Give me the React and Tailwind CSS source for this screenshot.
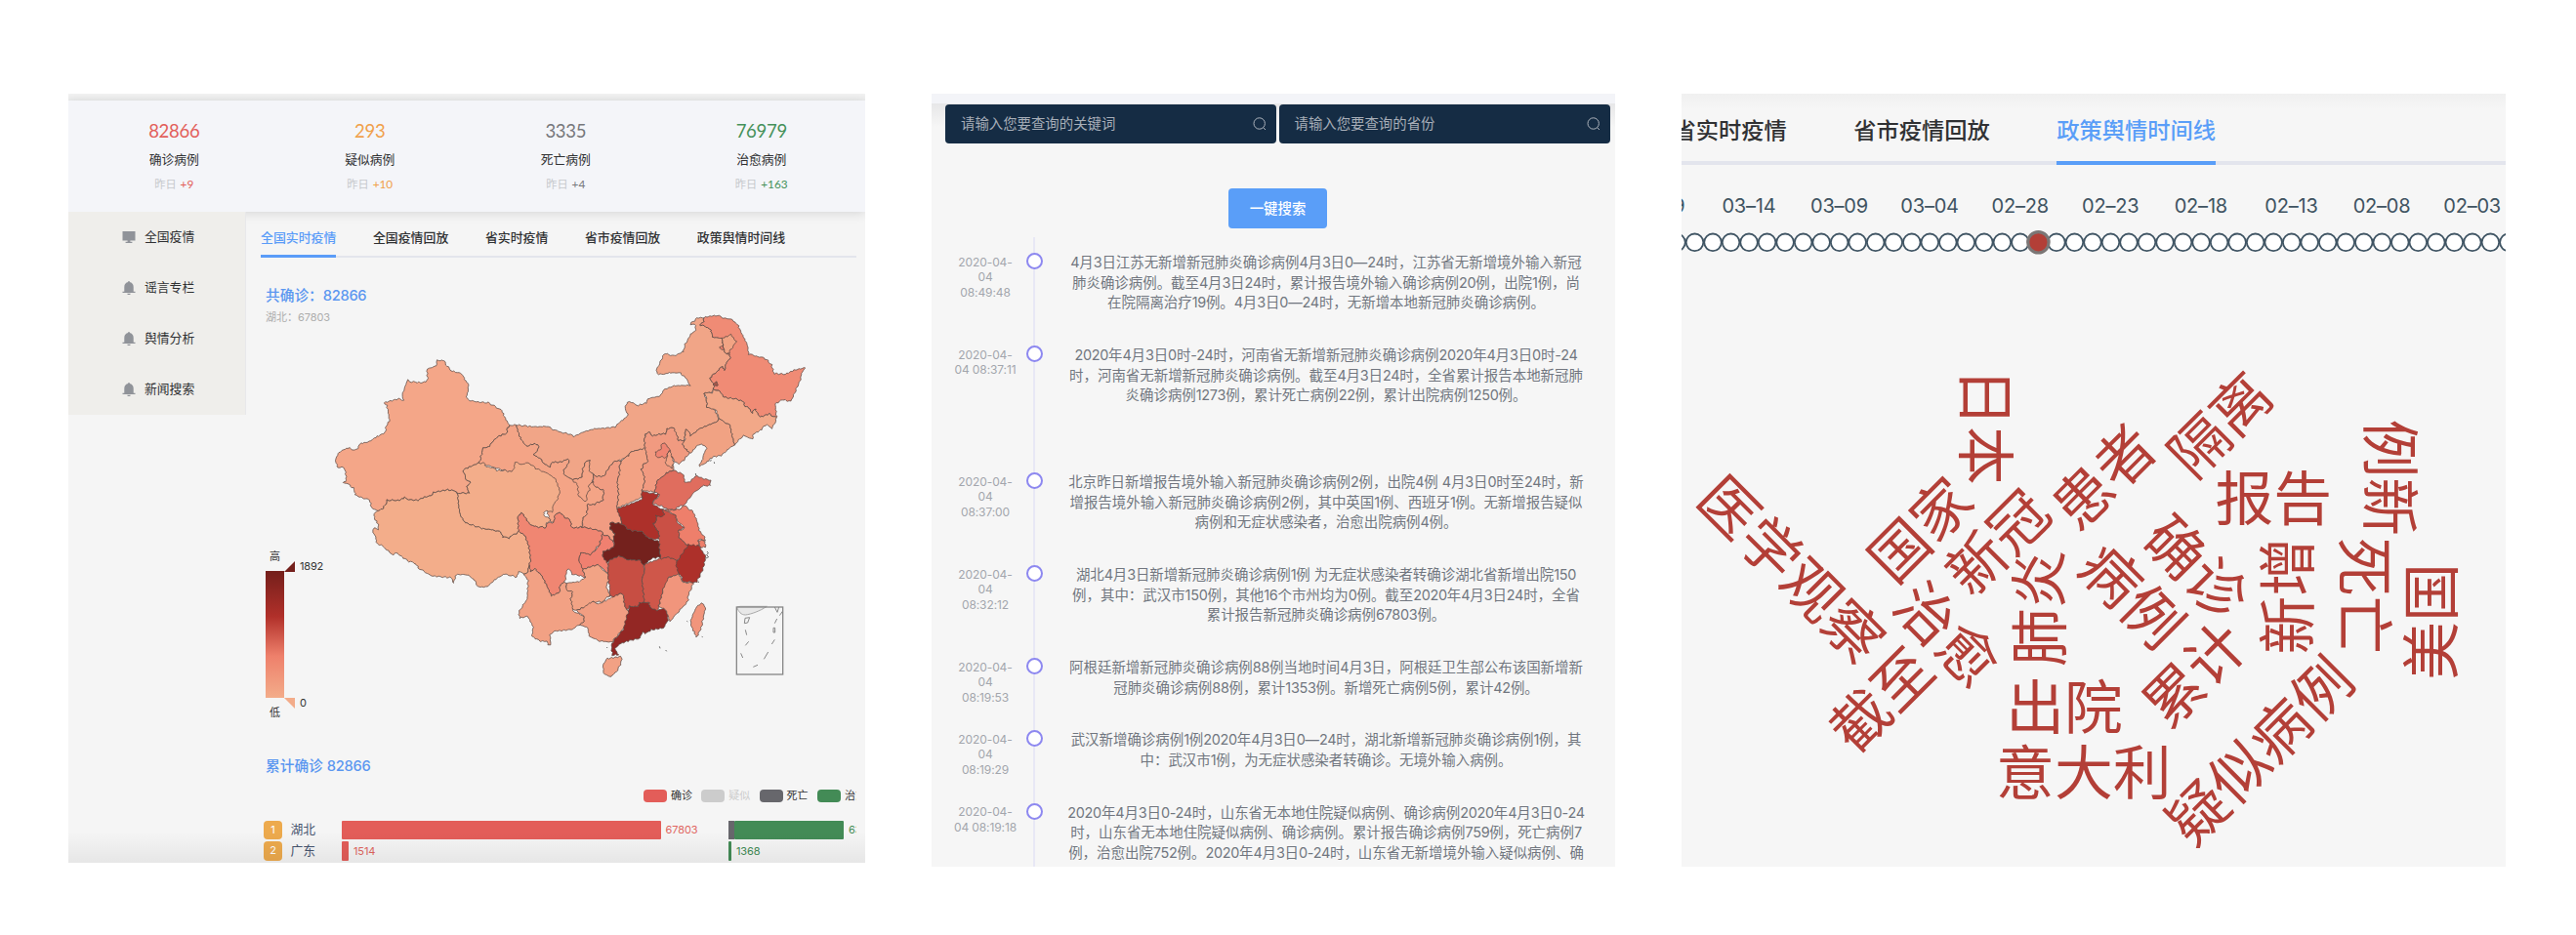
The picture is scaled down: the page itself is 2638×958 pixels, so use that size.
import React from "react";

const STATS = [
  { value: "82866", label: "确诊病例", delta: "+9", color: "text-[#e2605b]" },
  { value: "293", label: "疑似病例", delta: "+10", color: "text-[#f0a04b]" },
  { value: "3335", label: "死亡病例", delta: "+4", color: "text-[#77787c]" },
  { value: "76979", label: "治愈病例", delta: "+163", color: "text-[#45915a]" },
];

const TABS = ["全国实时疫情", "全国疫情回放", "省实时疫情", "省市疫情回放", "政策舆情时间线"];

// Province outlines: [fill, vertical offset, horizontal offset, points]
const PROVINCES = [
  ["#f4a688", 0, 0, "352,178 376,178 380,192 398,210 420,216 432,222 440,240 449,252 448,272 442,288 448,300 480,306 510,308 535,322 552,332 560,350 575,378 568,386 569,402 545,410 525,424 514,442 493,448 488,475 482,493 460,502 432,514 440,532 440,542 456,554 444,566 452,586 415,586 410,580 385,575 340,584 333,594 310,600 295,608 265,606 252,598 240,608 200,608 188,632 170,640 152,632 146,606 128,602 102,592 96,570 76,556 62,554 74,546 70,512 60,506 48,508 40,486 48,464 70,450 86,446 90,454 108,450 118,432 140,430 160,416 194,400 196,378 207,364 203,340 199,318 190,308 235,296 249,300 246,284 262,238 275,244 310,246 324,240 322,204 345,196 352,190"],
  ["#f3ad8a", 570, 0, "170,70 160,78 160,92 172,110 172,128 160,122 154,134 164,150 168,172 186,178 200,192 218,206 226,198 262,224 285,232 296,246 335,270 398,276 403,292 412,266 440,266 456,272 470,286 476,304 508,304 525,286 560,264 598,274 604,256 620,264 630,262 636,240 640,218 635,180 622,146 604,130 598,140 585,144 572,154 556,150 548,134 520,128 490,124 440,106 424,84 420,60 416,20 410,10 385,5 340,14 333,24 310,30 295,38 265,36 252,28 240,38 200,38 188,62"],
  ["#f4a486", 0, 0, "575,378 596,376 604,400 606,410 626,442 650,434 664,436 664,450 650,468 670,480 685,498 700,504 706,490 735,490 756,480 758,492 742,515 742,528 768,544 790,540 834,550 840,566 865,578 862,610 842,616 838,622 816,620 812,655 802,660 798,688 785,692 766,692 762,670 745,660 728,644 714,654 712,676 700,672 690,640 700,600 640,540 482,493 488,475 493,448 514,442 525,424 545,410 569,402 568,386"],
  ["#f3ad8a", 0, 0, "482,493 500,494 502,504 525,508 535,516 560,516 572,520 588,516 592,490 612,498 632,492 660,512 690,524 715,540 730,580 722,606 708,624 708,644 690,640 680,644 684,656 702,666 700,672 688,678 688,694 676,690 660,690 640,684 626,664 612,646 602,656 602,690 604,700 598,710 585,714 572,724 556,720 548,704 520,698 490,694 440,676 424,654 420,630 416,590 415,586 452,586 444,566 456,554 440,542 440,532 432,514 460,502"],
  ["#f1a587", 0, 810, "-214,376 -180,380 -150,382 -120,380 -100,390 -80,398 -50,404 -38,412 -10,398 25,388 60,386 90,382 108,364 130,348 120,326 128,306 145,308 160,316 185,308 195,294 228,288 240,268 270,256 320,254 310,236 290,216 262,216 250,216 242,220 222,220 216,208 242,156 270,164 300,150 304,130 322,98 338,86 336,70 322,66 340,48 362,46 362,58 350,68 372,76 384,84 390,106 418,110 424,144 430,158 442,158 444,172 432,184 426,208 420,196 400,214 380,234 394,252 392,270 384,276 362,280 370,300 372,322 392,326 408,356 404,366 375,378 345,390 322,410 316,394 306,390 302,424 284,424 280,408 272,404 270,384 250,388 246,404 230,404 204,410 196,398 182,404 180,420 182,448 164,452 140,458 132,470 120,476 106,484 88,488 70,508 56,534 32,534 24,528 6,518 12,486 2,486 -8,505 -12,536 -20,540 -42,544 -68,528 -68,515 -52,492 -54,480 -75,490 -104,490 -110,504 -125,498 -140,480 -160,468 -146,450 -146,436 -160,434 -184,442 -204,410"],
  ["#f4a486", 0, 0, "768,544 790,540 798,536 802,505 812,486 822,486 820,516 834,530 830,552 818,560 822,576 812,590 812,612 800,606 788,594 784,560"],
  ["#f08b75", 0, 810, "362,46 380,42 405,40 425,48 450,52 468,72 484,104 496,130 500,158 520,164 548,170 570,190 578,218 612,220 640,208 674,200 662,218 660,236 650,256 630,304 602,298 582,312 586,354 562,342 552,346 534,352 520,326 512,340 498,322 488,318 486,306 460,296 425,292 412,272 392,266 394,252 380,234 400,214 420,196 426,208 432,184 444,172 442,158 430,158 424,144 418,110 390,106 384,84 372,76 350,68 362,58"],
  ["#f2a484", 0, 810, "418,110 436,104 446,98 462,120 450,138 440,154 430,158 424,146"],
  ["#ec806c", 0, 810, "410,138 420,131 424,144 416,144"],
  ["#a8574b", 0, 810, "391,250 400,244 407,250 402,258 396,254"],
  ["#f2a888", 0, 810, "392,268 412,272 425,292 460,296 486,306 488,318 498,322 512,340 520,326 534,352 552,346 562,342 586,354 582,370 570,386 554,374 540,390 514,404 512,420 484,408 456,438 448,406 442,376 428,370 410,356 400,330 372,322 370,290 362,280 372,276 388,278"],
  ["#f1a283", 0, 810, "410,356 428,370 442,376 448,406 456,438 430,456 418,470 392,474 360,498 350,502 346,498 356,490 362,464 372,450 364,438 345,436 330,454 318,464 312,456 296,436 304,422 306,390 316,394 322,410 345,390 375,378 404,366"],
  ["#f19a80", 0, 810, "318,464 300,484 288,496 274,490 265,472 270,515 248,524 218,550 212,582 172,578 180,550 178,530 170,514 178,496 190,490 182,450 180,420 184,404 196,398 204,410 230,404 246,404 250,388 270,384 280,408 284,424 302,424 296,436 312,456"],
  ["#f3a284", 0, 810, "250,464 260,456 262,470 270,490 264,508 248,500 244,486 250,478"],
  ["#f08472", 0, 810, "232,438 242,430 250,444 260,454 250,464 246,478 232,474 216,476 214,460 230,452"],
  ["#f3a284", 0, 810, "182,448 164,452 140,458 132,470 120,476 110,486 104,500 102,530 96,546 100,590 95,632 135,616 172,598 172,578 180,550 178,530 170,514 178,496 190,490"],
  ["#f19c82", 0, 0, "920,486 898,488 880,508 866,534 842,534 834,530 832,556 840,566 865,578 862,610 842,616 838,622 816,620 812,655 802,660 798,690 830,696 858,704 862,712 880,720 895,736 895,720 900,710 885,698 885,676 920,680 918,666 905,632 910,590 906,546 912,530 914,500"],
  ["#f08672", 570, 0, "602,130 602,86 612,76 626,94 640,114 660,120 676,120 688,124 690,108 712,106 714,84 728,74 745,90 762,100 766,122 785,122 798,120 830,126 858,134 862,142 850,175 825,205 795,198 788,222 800,238 800,250 808,274 785,268 768,266 762,252 752,250 745,290 732,296 728,322 705,332 690,300 670,264 652,248 640,258 636,240 640,218 635,180 622,146"],
  ["#f08070", 570, 0, "862,142 880,150 895,166 897,180 885,188 862,196 862,212 878,230 878,262 864,250 850,236 830,240 800,250 795,236 788,222 795,198 825,205 850,180"],
  ["#f2a184", 570, 0, "636,240 640,258 652,248 670,264 690,300 705,332 728,322 732,296 745,290 750,292 750,310 770,320 764,340 772,366 768,378 804,394 804,410 790,420 770,434 740,438 712,440 700,452 702,482 695,484 690,472 668,470 644,456 648,428 632,394 606,400 604,380 630,340 632,284 620,264 630,262"],
  ["#f2a385", 570, 0, "750,292 790,288 808,274 800,250 830,240 850,236 866,258 878,262 880,288 872,300 884,330 860,350 830,350 820,364 800,368 780,376 770,372 764,340 770,320 750,312"],
  ["#f29e82", 570, 0, "780,376 800,368 830,350 850,356 870,346 890,336 918,324 926,330 928,356 934,374 942,376 940,402 926,430 890,474 850,470 820,455 815,430 790,420 804,410 804,394"],
  ["#932724", 570, 0, "942,376 944,364 970,364 975,352 1005,352 1006,366 1030,376 1050,370 1060,384 1062,408 1048,430 1010,436 992,448 985,442 975,462 940,470 912,480 900,494 910,512 892,514 888,490 895,470 926,434 932,405"],
  ["#c74e43", 570, 0, "880,222 915,208 935,220 975,222 988,234 990,258 982,280 990,352 975,352 970,364 944,364 934,374 928,356 926,330 918,324 895,334 882,332 884,310 880,288 878,262"],
  ["#cf574a", 570, 0, "990,234 1040,216 1062,212 1090,222 1092,240 1096,266 1066,274 1060,296 1048,308 1034,364 1030,378 1006,366 1005,352 990,352 982,280 990,258"],
  ["#f1957c", 570, 0, "1096,264 1108,290 1140,292 1124,330 1124,348 1100,374 1068,410 1060,384 1050,370 1034,366 1048,308 1064,276"],
  ["#ca5045", 570, 0, "1045,66 1060,72 1088,86 1088,102 1110,122 1096,130 1096,152 1125,178 1118,186 1110,205 1090,222 1060,212 1040,218 1036,195 1034,165 1034,136 1016,110 1028,98 1025,84 1050,82"],
  ["#ee7f6b", 570, 0, "1052,66 1076,68 1100,64 1112,54 1138,72 1152,102 1158,130 1176,152 1176,160 1155,158 1158,178 1125,178 1096,152 1096,130 1110,128 1110,118 1090,100 1086,84"],
  ["#ee7f6b", 570, 0, "1155,160 1176,164 1178,182 1162,182"],
  ["#74211d", 570, 0, "885,106 920,110 945,130 985,134 995,150 1035,165 1036,195 1040,212 1015,216 988,236 975,222 935,220 915,208 880,222 874,230 862,212 862,196 885,188 897,180 895,150 900,140 885,128"],
  ["#ad302a", 570, 0, "905,64 945,50 982,36 982,10 1022,18 1035,20 1012,48 1045,66 1050,82 1040,90 1025,84 1028,98 1016,110 1034,136 1034,156 1020,158 995,150 985,134 945,130 920,110 918,96"],
  ["#e06d5e", 0, 810, "212,582 218,550 248,524 268,516 300,528 304,552 318,552 340,532 355,540 382,546 382,562 358,564 330,586 302,622 282,628 276,636 250,636 240,628 204,616 228,590"],
  ["#ad302a", 570, 0, "1125,174 1158,178 1178,210 1170,250 1150,290 1108,288 1104,270 1094,262 1086,234 1102,208 1110,196"],
  ["#f1957c", 570, 0, "1150,364 1166,354 1178,366 1164,430 1150,460 1132,418 1136,396"],
  ["#f2a184", 570, 0, "875,524 918,518 920,532 905,565 886,580 866,572 862,545"],
];

// Adds a small position-based ripple so that shared borders stay aligned.
function outline(points, dy, dx) {
  const pts = points.split(" ").map((p) => p.split(",").map(Number));
  const out = [];
  pts.forEach(([x1, y1], i) => {
    const [x2, y2] = pts[(i + 1) % pts.length];
    const n = Math.max(1, Math.round(Math.hypot(x2 - x1, y2 - y1) / 5));
    for (let k = 0; k < n; k++) {
      const x = x1 + ((x2 - x1) * k) / n + dx;
      const y = y1 + ((y2 - y1) * k) / n + dy;
      const rx = 1.5 * Math.sin(y * 0.42 + x * 0.13) + 0.9 * Math.sin(y * 0.9 - x * 0.3);
      const ry = 1.5 * Math.sin(x * 0.42 - y * 0.13) + 0.9 * Math.sin(x * 0.9 + y * 0.3);
      out.push(`${(x + rx).toFixed(1)},${(y + ry).toFixed(1)}`);
    }
  });
  return out.join(" ");
}

function ChinaMap() {
  return (
    <svg className="absolute left-[78px] top-[46px] h-[390px] w-[500px]" viewBox="0 0 1500 1170">
      <g stroke="#5b4a44" strokeOpacity="0.75" strokeWidth="3" strokeLinejoin="round">
        {PROVINCES.map(([fill, dy, dx, pts], i) => (
          <polygon key={i} fill={fill} points={outline(pts, dy, dx)} />
        ))}
      </g>
      <g fill="none" stroke="#6b6b6b" strokeWidth="3">
        <path d="M1182 765l4 5-5 6 6 6-8 4M1120 979l3 2M1155 858l3 2M1166 1027l3 1M1036 1057l2 6M1055 1068l3 4M874 1059l2 3M1147 525l1 6M1190 487l6 -2M1204 490l1 5" />
        <path d="M1274 936L1284 934H1366C1345 948 1318 958 1300 960C1286 960 1280 950 1274 938" fill="#e8e8e8" stroke="#aaa" />
        <rect x="1273" y="936" width="142" height="207" stroke="#888" strokeWidth="4" />
        <path stroke="#888" d="M1390 936l8 16 5-16M1415 948l-10 14M1299 970l14-2-6 16-10 2zM1397 972l-7 14M1300 1006l4 16M1386 1000h5v14h-5zM1310 1042l-10 12M1390 1036l-9 14M1286 1078l6 14M1370 1074l-13 22M1324 1120l14-6" />
      </g>
    </svg>
  );
}

function MonitorIcon() {
  return (
    <svg className="h-[14px] w-[14px]" viewBox="0 0 14 14" fill="#909399">
      <path d="M.5 1h13v9.600H.5zM5.600 10.600h2.800v1.200h2V13H3.600v-1.200h2z" />
    </svg>
  );
}

function BellIcon() {
  return (
    <svg className="h-[14px] w-[14px]" viewBox="0 0 14 14" fill="#909399">
      <path d="M6.300 0h1.400v1.100C10.200 1.500 11.700 3.400 11.700 6v4.700h1.800v1.200H.5v-1.200h1.800V6c0-2.600 1.500-4.500 4-4.900zM5.300 12.700h3.400a1.700 1.500 0 0 1-3.400 0z" />
    </svg>
  );
}

function DashboardPanel() {
  return (
    <section className="flex h-[788px] w-[816px] shrink-0 flex-col overflow-hidden bg-[#f5f5f5] font-['Lato','Noto_Sans_CJK_SC',sans-serif]">
      <div className="h-[7px] shrink-0 bg-gradient-to-b from-[#f2f2f2] to-[#ebecec]" />
      <div className="relative z-10 flex h-[114px] shrink-0 bg-[#f4f5f9] pl-2 pr-1.5 shadow-[0_2px_10px_rgba(0,0,0,0.12)]">
        {STATS.map((s) => (
          <div key={s.label} className="flex flex-1 flex-col items-center pt-[19px]">
            <div className={`${s.color} h-6 text-[18.500px] leading-6 tracking-[-0.3px]`}>{s.value}</div>
            <div className="mt-[7px] h-5 text-[12.800px] leading-5 text-[#303133]">{s.label}</div>
            <div className="mt-[6px] flex h-5 items-center gap-1 text-[11.200px] leading-5 text-[#c6c8cc]">
              <span>昨日</span>
              <span className={`${s.color} text-[11.800px]`}>{s.delta}</span>
            </div>
          </div>
        ))}
      </div>
      <div className="flex min-h-0 flex-1">
        <div className="w-[182px] shrink-0">
          <nav className="relative z-20 h-[208px] border-r border-[#e8e8ea] bg-[#efeeeb]">
            {["全国疫情", "谣言专栏", "舆情分析", "新闻搜索"].map((t, i) => (
              <div key={t} className="flex h-[52px] items-center gap-[9px] pl-[55px] text-[12.800px] text-[#303133]">
                {i === 0 ? <MonitorIcon /> : <BellIcon />}
                <span className="pb-[2px] leading-5">{t}</span>
              </div>
            ))}
          </nav>
        </div>
        <div className="flex flex-1 flex-col pl-[15px] pr-[9px]">
          <div className="flex h-[47px] shrink-0 gap-[37.600px] border-b-2 border-[#e3e5ec] pt-[16px] text-[12.900px] font-medium leading-5 text-[#303133]">
            {TABS.map((t, i) => (
              <div
                key={t}
                className={
                  i === 0
                    ? "h-[31px] whitespace-nowrap border-b-[3px] border-[#5a9cf8] text-[#5a9cf8]"
                    : "whitespace-nowrap"
                }
              >
                {t}
              </div>
            ))}
          </div>
          <div className="relative -mx-[15px] h-[509px] shrink-0 pl-[20px] font-['Liberation_Sans','Noto_Sans_CJK_SC',sans-serif]">
            <div className="pt-[28px] text-[14.700px] font-medium leading-[22px] text-[#5b97f0]">共确诊：<span className="font-['Inter'] tracking-[-0.3px]">82866</span></div>
            <div className="mt-[2px] text-[11px] leading-[18px] text-[#adadad]">湖北：<span className="font-['Inter'] tracking-[-0.1px]">67803</span></div>
            <ChinaMap />
            <div className="mt-[228px] flex items-start text-[11px] text-[#333]">
              <div className="flex w-[19px] flex-col items-center leading-4">
                <span>高</span>
                <div className="my-[7px] h-[130px] w-[19px] bg-[linear-gradient(to_bottom,#741f1b,#b1302a_36%,#ee806b_67%,#f3ac8a)]" />
                <span>低</span>
              </div>
              <div className="flex h-[152px] flex-col justify-between pt-[12px] font-['Inter'] tracking-[-0.2px]">
                <div className="flex h-3 items-center gap-[5px]">
                  <svg className="h-[11px] w-[11px]" viewBox="0 0 11 11"><path d="M0 11H11V0z" fill="#74201c" /></svg>
                  <span className="leading-3">1892</span>
                </div>
                <div className="-mb-3 flex h-3 items-center gap-[5px]">
                  <svg className="h-[11px] w-[11px]" viewBox="0 0 11 11"><path d="M0 0H11V11z" fill="#f3ac8a" /></svg>
                  <span className="leading-3">0</span>
                </div>
              </div>
            </div>
            <div className="mt-[36px] text-[14.700px] font-medium leading-[22px] text-[#5b97f0]">累计确诊 <span className="font-['Inter'] tracking-[-0.3px]">82866</span></div>
          </div>
          <div className="relative -ml-[15px] -mr-[9px] flex-1 font-['Inter','Noto_Sans_CJK_SC',sans-serif] text-[11px]">
            <div className="flex w-[625px] overflow-hidden whitespace-nowrap pl-[407px] pt-[36px] leading-[13px]">
              <div className="flex w-[59.300px] shrink-0 gap-1 text-[#333]"><i className="h-[13px] w-6 rounded bg-[#e35d59]" />确诊</div>
              <div className="flex w-[59.300px] shrink-0 gap-1 text-[#ccc]"><i className="h-[13px] w-6 rounded bg-[#ccc]" />疑似</div>
              <div className="flex w-[59.300px] shrink-0 gap-1 text-[#333]"><i className="h-[13px] w-6 rounded bg-[#67676c]" />死亡</div>
              <div className="flex w-[59.300px] shrink-0 gap-1 text-[#333]"><i className="h-[13px] w-6 rounded bg-[#438b56]" />治愈</div>
            </div>
            <div className="mt-[18.500px] flex w-[625px] flex-col gap-[2px] overflow-hidden pl-[18px]">
              <div className="flex h-[19.500px] shrink-0 items-center">
                <b className="h-full w-[19px] shrink-0 rounded-sm bg-[#edaa4d] text-center font-normal leading-[19px] text-white">1</b>
                <span className="w-[61px] shrink-0 pl-[8.500px] text-[12.800px] leading-5 text-[#46546e]">湖北</span>
                <i className="h-full w-[327px] shrink-0 rounded-[1px] bg-[#e35d59]" />
                <span className="w-[69px] shrink-0 pl-[4.500px] tracking-[-0.1px] text-[#e06560]">67803</span>
                <i className="h-full w-[6px] shrink-0 bg-[#67676c]" />
                <i className="h-full w-[112px] shrink-0 rounded-[1px] bg-[#438b56]" />
                <span className="shrink-0 pl-[5px] tracking-[-0.1px] text-[#438b56]">63762</span>
              </div>
              <div className="flex h-[19.500px] shrink-0 items-center">
                <b className="h-full w-[19px] shrink-0 rounded-sm bg-[#edaa4d] text-center font-normal leading-[19px] text-white">2</b>
                <span className="w-[61px] shrink-0 pl-[8.500px] text-[12.800px] leading-5 text-[#46546e]">广东</span>
                <i className="h-full w-[7px] shrink-0 rounded-[1px] bg-[#e35d59]" />
                <span className="w-[389px] shrink-0 pl-[5px] tracking-[-0.1px] text-[#e06560]">1514</span>
                <i className="h-full w-[3px] shrink-0 rounded-[1px] bg-[#438b56]" />
                <span className="shrink-0 pl-[5px] tracking-[-0.1px] text-[#438b56]">1368</span>
              </div>
            </div>
          </div>
        </div>
      </div>
      <div className="relative z-20 -mt-[32px] h-[32px] shrink-0 bg-gradient-to-b from-transparent to-black/6" />
    </section>
  );
}

const NEWS = [
  {
    time: ["2020-04-", "04", "08:49:48"],
    height: "h-[95px]",
    lines: [
      "4月3日江苏无新增新冠肺炎确诊病例4月3日0—24时，江苏省无新增境外输入新冠",
      "肺炎确诊病例。截至4月3日24时，累计报告境外输入确诊病例20例，出院1例，尚",
      "在院隔离治疗19例。4月3日0—24时，无新增本地新冠肺炎确诊病例。",
    ],
  },
  {
    time: ["2020-04-", "04 08:37:11"],
    height: "h-[130px]",
    lines: [
      "2020年4月3日0时-24时，河南省无新增新冠肺炎确诊病例2020年4月3日0时-24",
      "时，河南省无新增新冠肺炎确诊病例。截至4月3日24时，全省累计报告本地新冠肺",
      "炎确诊病例1273例，累计死亡病例22例，累计出院病例1250例。",
    ],
  },
  {
    time: ["2020-04-", "04", "08:37:00"],
    height: "h-[95px]",
    lines: [
      "北京昨日新增报告境外输入新冠肺炎确诊病例2例，出院4例 4月3日0时至24时，新",
      "增报告境外输入新冠肺炎确诊病例2例，其中英国1例、西班牙1例。无新增报告疑似",
      "病例和无症状感染者，治愈出院病例4例。",
    ],
  },
  {
    time: ["2020-04-", "04", "08:32:12"],
    height: "h-[95px]",
    lines: [
      "湖北4月3日新增新冠肺炎确诊病例1例 为无症状感染者转确诊湖北省新增出院150",
      "例，其中：武汉市150例，其他16个市州均为0例。截至2020年4月3日24时，全省",
      "累计报告新冠肺炎确诊病例67803例。",
    ],
  },
  {
    time: ["2020-04-", "04", "08:19:53"],
    height: "h-[74.300px]",
    lines: [
      "阿根廷新增新冠肺炎确诊病例88例当地时间4月3日，阿根廷卫生部公布该国新增新",
      "冠肺炎确诊病例88例，累计1353例。新增死亡病例5例，累计42例。",
    ],
  },
  {
    time: ["2020-04-", "04", "08:19:29"],
    height: "h-[74.300px]",
    lines: [
      "武汉新增确诊病例1例2020年4月3日0—24时，湖北新增新冠肺炎确诊病例1例，其",
      "中：武汉市1例，为无症状感染者转确诊。无境外输入病例。",
    ],
  },
  {
    time: ["2020-04-", "04 08:19:18"],
    height: "h-[95px]",
    lines: [
      "2020年4月3日0-24时，山东省无本地住院疑似病例、确诊病例2020年4月3日0-24",
      "时，山东省无本地住院疑似病例、确诊病例。累计报告确诊病例759例，死亡病例7",
      "例，治愈出院752例。2020年4月3日0-24时，山东省无新增境外输入疑似病例、确",
    ],
  },
];

// Sets runs of digits a little tighter than the Chinese text around them.
function NewsLine({ text }) {
  return (
    <div className="whitespace-nowrap">
      {text.split(/([\d-]+)/).map((part, i) =>
        i % 2 ? <span key={i} className="tracking-[-0.3px]">{part}</span> : part
      )}
    </div>
  );
}

function SearchField({ text }) {
  return (
    <div className="flex h-10 w-[339px] items-center justify-between rounded bg-[#152c44] pl-4 pr-[10px] text-[14.400px] text-[#a7aeb8]">
      <span>{text}</span>
      <svg className="h-[14px] w-[14px]" viewBox="0 0 14 14" fill="none" stroke="#aeb4bd" strokeWidth="1">
        <circle cx="6.700" cy="6.500" r="5.700" />
        <path d="M10.600 10.600l2.400 2.400" />
      </svg>
    </div>
  );
}

function NewsPanel() {
  return (
    <section className="ml-[68px] flex h-[792px] w-[700px] shrink-0 flex-col overflow-hidden bg-[#f6f6f6] font-['Inter','Noto_Sans_CJK_SC',sans-serif]">
      <div className="h-[10px] shrink-0 bg-[#f3f4f8]" />
      <div className="flex h-[24px] shrink-0 gap-[2.500px] bg-gradient-to-b from-[#e7e7e8] to-[#f6f6f6] pl-[14px] pt-px">
        <SearchField text="请输入您要查询的关键词" />
        <SearchField text="请输入您要查询的省份" />
      </div>
      <button className="ml-[304px] mt-[63px] h-[41px] w-[101px] shrink-0 rounded bg-[#5a9ef8] text-[14.400px] font-medium text-white">
        一键搜索
      </button>
      <div className="relative mt-[9px] flex-1 pt-[15px]">
        <div className="absolute bottom-0 left-[104px] top-0 w-[2px] bg-[#e8e8f5]" />
        {NEWS.map((n) => (
          <div key={n.time.join()} className={`${n.height} relative flex`}>
            <div className="ml-[20px] flex w-[70px] flex-col items-center pt-[2.500px] text-[12px] leading-[15.500px] tracking-[-0.1px] text-[#a3a6ad]">
              {n.time.map((t) => (
                <div key={t} className="whitespace-nowrap">{t}</div>
              ))}
            </div>
            <div className="ml-[7px] mt-[1px] h-[17px] w-[17px] shrink-0 rounded-full border-2 border-[#8d88f0] bg-white" />
            <div className="ml-[25px] flex w-[530px] shrink-0 flex-col items-center pt-px text-[14.450px] leading-[20.700px] text-[#71767f]">
              {n.lines.map((l) => (
                <NewsLine key={l} text={l} />
              ))}
            </div>
          </div>
        ))}
      </div>
    </section>
  );
}

const DATES = ["03–19", "03–14", "03–09", "03–04", "02–28", "02–23", "02–18", "02–13", "02–08", "02–03"];

// [word, centre x, centre y, rotation]
const WORDS = [
  ["日本", 2034.3, 436.9, 90],
  ["医学观察", 1835.3, 582.2, 45],
  ["国家", 1965.7, 541.8, -45],
  ["新冠", 2045, 555, -45],
  ["治愈", 1994.5, 649, 45],
  ["截至", 1926, 716, -45],
  ["患者", 2153.7, 487.7, -45],
  ["肺炎", 2087.3, 623.3, -90],
  ["出院", 2114, 723.3, 0],
  ["意大利", 2133.8, 790.3, 0],
  ["隔离", 2272.7, 434.3, -45],
  ["报告", 2328.2, 509.3, 0],
  ["例新", 2448, 489.3, 90],
  ["确诊", 2250, 581, 45],
  ["病例", 2184, 610, 45],
  ["新增", 2341.3, 610.8, -90],
  ["累计", 2246.7, 690, -45],
  ["死亡", 2422, 610.5, 90],
  ["美国", 2489, 637, -90],
  ["疑似病例", 2313.7, 768.5, -45],
];

function TimelinePanel() {
  const circles = Array.from({ length: 47 }, (_, i) => i - 20);
  return (
    <section className="ml-[68px] flex h-[792px] w-[844px] shrink-0 flex-col overflow-hidden bg-[#f6f6f6] font-['Inter','Noto_Sans_CJK_SC',sans-serif]">
      <div className="flex h-[73px] shrink-0 border-b-4 border-[#e3e5ed] bg-[linear-gradient(to_bottom,#f0f0f0,#f6f6f6_16px)]">
        <div className="-ml-[8.500px] flex shrink-0 gap-[68.500px] whitespace-nowrap pt-[22px] text-[23.250px] font-medium leading-8 text-[#303133]">
          <span>省实时疫情</span>
          <span>省市疫情回放</span>
          <span className="h-[51px] border-b-4 border-[#5a9ef8] text-[#5a9ef8]">政策舆情时间线</span>
        </div>
      </div>
      <div className="-ml-[70px] mt-[30px] flex shrink-0 text-[20px] leading-6 tracking-[-0.2px] text-[#3f5361]">
        {DATES.map((d) => (
          <span key={d} className="w-[92.600px] shrink-0 text-center">{d}</span>
        ))}
      </div>
      <svg className="mt-[11px] h-[28px] w-[844px] shrink-0" viewBox="1722 234 844 28">
        <path d="M1722 248.300H2566" stroke="#304654" strokeWidth="2" />
        <g fill="#fff" stroke="#405564" strokeWidth="1.800">
          {circles.map((k) => (
            <circle key={k} cx={2087.4 + k * 18.52} cy="248.300" r="8.800" />
          ))}
        </g>
        <circle cx="2087.400" cy="248.300" r="10.700" fill="#b33f37" stroke="#7b7675" strokeWidth="3.200" />
      </svg>
      <svg className="w-[844px] flex-1" viewBox="1722 262 844 626" fill="#b33f37" fontSize="59.800" textAnchor="middle">
        {WORDS.map(([w, x, y, r]) => (
          <text key={w} transform={`translate(${x} ${y}) rotate(${r})`} y="23.200">{w}</text>
        ))}
      </svg>
    </section>
  );
}

export default function App() {
  return (
    <main className="flex h-[958px] w-[2638px] items-start overflow-hidden bg-white pl-[70px] pt-24">
      <DashboardPanel />
      <NewsPanel />
      <TimelinePanel />
    </main>
  );
}
